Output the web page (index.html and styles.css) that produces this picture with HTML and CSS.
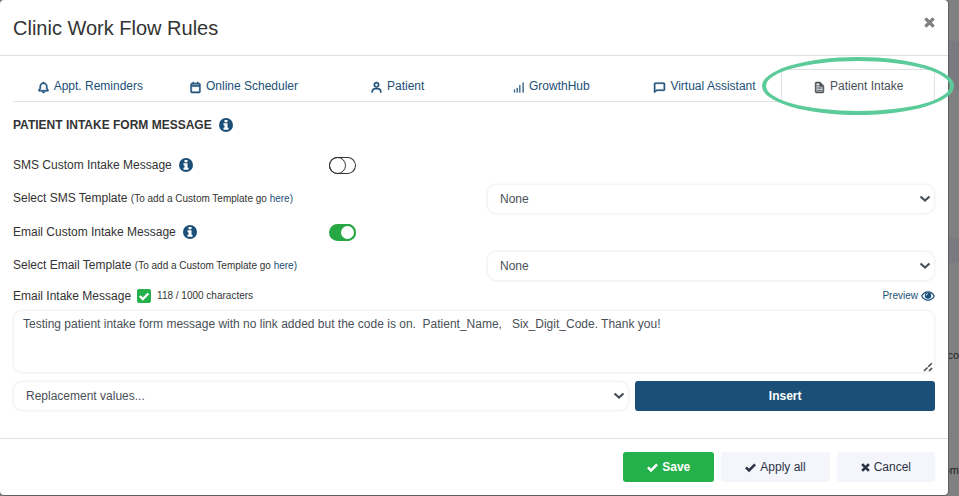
FILE: index.html
```html
<!DOCTYPE html>
<html lang="en">
<head>
    <meta charset="UTF-8">
    <meta name="viewport" content="width=device-width, initial-scale=1.0">
    <title>Clinic Work Flow Rules</title>
    <link rel="stylesheet" href="styles.css">
</head>
<body>
    <svg class="sprite" aria-hidden="true">
        <symbol id="icon-info" viewBox="0 0 14 14">
            <circle cx="7" cy="7" r="7" fill="currentColor"/>
            <path fill="#fff" d="M5.500 2h3v2.300h-3zM4.500 5.300h4v4.500h1v2h-5v-2h1V7.300h-1z"/>
        </symbol>
        <symbol id="icon-check" viewBox="0 0 12 12">
            <path fill="none" stroke="currentColor" stroke-width="2.800" d="M1 5.800l3.400 3.400L11 2.600"/>
        </symbol>
        <symbol id="icon-times" viewBox="0 0 12 12">
            <path fill="none" stroke="currentColor" stroke-width="3.600" d="M1.500 1.500l9 9M10.500 1.500l-9 9"/>
        </symbol>
    </svg>

    <div class="modal" role="dialog" aria-labelledby="modalTitle">
        <header class="modal-header">
            <h1 class="modal-title" id="modalTitle">Clinic Work Flow Rules</h1>
            <button type="button" class="close-btn" aria-label="Close">
                <svg class="icon-close"><use href="#icon-times"/></svg>
            </button>
        </header>

        <form class="modal-form">
            <div class="modal-body">
                <nav class="tabs">
                    <a class="tab" href="#reminders">
                        <svg class="tab-icon" viewBox="0 0 24 24"><path d="M19 13.600V10c0-3.200-2.200-5.900-5.100-6.700C13.600 2.500 12.900 2 12 2s-1.600.5-1.900 1.300C7.200 4.100 5 6.800 5 10v3.600l-1.700 1.700a1 1 0 0 0-.3.7v2a1 1 0 0 0 1 1h16a1 1 0 0 0 1-1v-2a1 1 0 0 0-.3-.7zM19 17H5v-.6l1.700-1.700A1 1 0 0 0 7 14v-4c0-2.800 2.200-5 5-5s5 2.200 5 5v4c0 .3.100.5.3.7l1.700 1.700zM12 22a3 3 0 0 0 2.800-2H9.200A3 3 0 0 0 12 22z"/></svg>
                        Appt. Reminders
                    </a>
                    <a class="tab" href="#scheduler">
                        <svg class="tab-icon" viewBox="0 0 24 24"><path d="M19 4h-2V2h-2v2H9V2H7v2H5a2 2 0 0 0-2 2v14a2 2 0 0 0 2 2h14a2 2 0 0 0 2-2V6a2 2 0 0 0-2-2zm0 16H5V10h14zM5 8V6h14v2z"/></svg>
                        Online Scheduler
                    </a>
                    <a class="tab" href="#patient">
                        <svg class="tab-icon" viewBox="0 0 24 24"><path d="M12 2a5 5 0 1 0 5 5 5 5 0 0 0-5-5zm0 8a3 3 0 1 1 3-3 3 3 0 0 1-3 3zm9 11v-1a7 7 0 0 0-7-7h-4a7 7 0 0 0-7 7v1h2v-1a5 5 0 0 1 5-5h4a5 5 0 0 1 5 5v1z"/></svg>
                        Patient
                    </a>
                    <a class="tab" href="#growthhub">
                        <svg class="tab-icon" viewBox="0 0 24 24"><path d="M4 16h1v5H4zM9 13h1v8H9zM14 8h1v13h-1zM20 3h1v18h-1z"/></svg>
                        GrowthHub
                    </a>
                    <a class="tab" href="#assistant">
                        <svg class="tab-icon" viewBox="0 0 24 24"><path d="M20 3H4a2 2 0 0 0-2 2v17l5.300-4H20a2 2 0 0 0 2-2V5a2 2 0 0 0-2-2zm0 13H6.700L4 18V5h16z"/></svg>
                        Virtual Assistant
                    </a>
                    <a class="tab active" href="#intake" aria-current="page">
                        <svg class="tab-icon" viewBox="0 0 24 24"><path d="M19.900 8.600l-6-6A1 1 0 0 0 13 2H6a2 2 0 0 0-2 2v16a2 2 0 0 0 2 2h12a2 2 0 0 0 2-2V9zM18 20H6V4h6v6h6zM8 12.500h8v1H8zM8 16.500h8v1H8zM8 8.500h2v1H8z"/></svg>
                        Patient Intake
                    </a>
                </nav>

                <h2 class="section-title">
                    PATIENT INTAKE FORM MESSAGE
                    <svg class="info-icon"><use href="#icon-info"/></svg>
                </h2>

                <div class="row row-toggle">
                    <div class="row-label">
                        <label for="smsToggle">SMS Custom Intake Message</label>
                        <svg class="info-icon"><use href="#icon-info"/></svg>
                    </div>
                    <input type="checkbox" class="toggle" id="smsToggle">
                </div>

                <div class="row row-select">
                    <div class="row-text">
                        <label for="smsTemplate">Select SMS Template</label>
                        <small>(To add a Custom Template go <a href="#templates">here)</a></small>
                    </div>
                    <select class="field" id="smsTemplate">
                        <option>None</option>
                    </select>
                </div>

                <div class="row row-toggle">
                    <div class="row-label">
                        <label for="emailToggle">Email Custom Intake Message</label>
                        <svg class="info-icon"><use href="#icon-info"/></svg>
                    </div>
                    <input type="checkbox" class="toggle" id="emailToggle" checked>
                </div>

                <div class="row row-select">
                    <div class="row-text">
                        <label for="emailTemplate">Select Email Template</label>
                        <small>(To add a Custom Template go <a href="#templates">here)</a></small>
                    </div>
                    <select class="field" id="emailTemplate">
                        <option>None</option>
                    </select>
                </div>

                <div class="message-header">
                    <label for="message">Email Intake Message</label>
                    <input type="checkbox" class="check" aria-label="Use email intake message" checked>
                    <small>118 / 1000 characters</small>
                    <a class="preview" href="#preview">
                        Preview
                        <svg class="eye-icon" viewBox="0 0 14 10"><path fill="none" stroke="currentColor" stroke-width="1.200" d="M.7 5C2.200 2.400 4.400.9 7 .9S11.800 2.400 13.300 5C11.800 7.600 9.600 9.100 7 9.100S2.200 7.600.7 5z"/><circle cx="7" cy="4.500" r="3.200" fill="currentColor"/><path fill="none" stroke="#fff" stroke-width=".8" d="M5.200 4.500A1.800 1.800 0 0 1 7 2.700"/></svg>
                    </a>
                </div>
                <textarea class="field message" id="message">Testing patient intake form message with no link added but the code is on.  Patient_Name,   Six_Digit_Code. Thank you!</textarea>

                <div class="insert-row">
                    <select class="field" aria-label="Replacement values">
                        <option>Replacement values...</option>
                    </select>
                    <button type="button" class="btn btn-primary">Insert</button>
                </div>
            </div>

            <footer class="modal-footer">
                <button type="submit" class="btn btn-success"><svg class="btn-icon"><use href="#icon-check"/></svg>Save</button>
                <button type="button" class="btn btn-light"><svg class="btn-icon"><use href="#icon-check"/></svg>Apply all</button>
                <button type="button" class="btn btn-light"><svg class="btn-icon btn-icon-times"><use href="#icon-times"/></svg>Cancel</button>
            </footer>
        </form>
    </div>

    <!-- page behind the modal -->
    <div class="backdrop">
        <div class="band band-top"></div>
        <div class="band band-middle"></div>
        <span class="cell cell-first">co</span>
        <span class="cell cell-second">om</span>
    </div>
</body>
</html>
```
FILE: styles.css
```css
*,
*::before,
*::after {
    box-sizing: border-box;
}

body {
    margin: 0;
    min-height: 100vh;
    background-color: #808080;
    color: #333333;
    font-family: "Liberation Sans", Arial, sans-serif;
    font-size: 12px;
    line-height: 16px;
    overflow: hidden;
}

a {
    color: #1b4f78;
    text-decoration: none;
}

small {
    font-size: 10px;
}

.sprite {
    display: none;
}

/* Modal */
.modal {
    position: relative;
    z-index: 1;
    margin-right: 11px;
    background-color: #ffffff;
    border-radius: 4px;
    box-shadow: 0 0 0 1px #606060;
}

.modal-header {
    display: flex;
    align-items: center;
    justify-content: space-between;
    height: 56px;
    padding: 0 13px;
    border-bottom: 1px solid #dee2e6;
}

.modal-title {
    margin: 0;
    font-size: 20px;
    font-weight: normal;
    line-height: 24px;
}

.close-btn {
    align-self: flex-start;
    display: flex;
    margin-top: 17px;
    padding: 0;
    border: none;
    background: none;
    color: #7f7f7f;
    cursor: pointer;
}

.icon-close {
    width: 11px;
    height: 11px;
}

.modal-body {
    padding: 13px 13px 27px;
}

.modal-footer {
    display: flex;
    justify-content: flex-end;
    gap: 7px;
    padding: 13px;
    border-top: 1px solid #dcdfe6;
}

/* Tabs */
.tabs {
    display: grid;
    grid-template-columns: repeat(6, 1fr);
    height: 33px;
    border-bottom: 1px solid #dee2e6;
}

.tab {
    display: flex;
    align-items: center;
    justify-content: center;
    gap: 4px;
    margin-bottom: -1px;
    border: 1px solid transparent;
}

.tab-icon {
    width: 13px;
    height: 13px;
    margin-top: 3px;
    fill: currentColor;
    stroke: currentColor;
    stroke-width: 1;
}

.tab.active {
    position: relative;
    border-color: #dee2e6;
    border-bottom-color: #ffffff;
    color: #495057;
}

/* Highlight ring round the open tab */
.tab.active::after {
    content: "";
    position: absolute;
    inset: -13px -20px -14px;
    border: 4px solid #5bcb9a;
    border-radius: 50%;
    pointer-events: none;
}

/* Form rows */
.section-title {
    display: flex;
    align-items: center;
    gap: 7px;
    height: 46px;
    margin: 0;
    font-size: 12px;
    font-weight: bold;
}

.info-icon {
    width: 14px;
    height: 14px;
    color: #1b4f78;
}

.row {
    display: grid;
    align-items: center;
    column-gap: 26px;
}

.row-toggle {
    grid-template-columns: repeat(3, 1fr);
    height: 34px;
}

.row-select {
    grid-template-columns: repeat(2, 1fr);
    height: 33px;
}

.row-label {
    display: flex;
    align-items: center;
    gap: 7px;
}

.toggle {
    appearance: none;
    display: flex;
    width: 27px;
    height: 17px;
    margin: 0;
    border-radius: 9px;
    box-shadow: inset 0 0 0 1px #333333;
    cursor: pointer;
}

.toggle::before {
    content: "";
    width: 17px;
    height: 17px;
    border: 1px solid #333333;
    border-radius: 50%;
}

.toggle:checked {
    justify-content: flex-end;
    background-color: #28a745;
    box-shadow: none;
}

.toggle:checked::before {
    border: 2px solid #28a745;
    background-color: #ffffff;
}

.field {
    width: 100%;
    height: 30px;
    padding: 0 12px;
    border: 1px solid #f3f3f4;
    border-radius: 9px;
    background-color: #ffffff;
    box-shadow: 0 0 3px rgba(0, 0, 0, 0.06);
    color: #495057;
    font-family: inherit;
    font-size: 12px;
    line-height: 16px;
}

select.field {
    appearance: none;
    background-image: url("data:image/svg+xml,%3Csvg xmlns='http://www.w3.org/2000/svg' width='12' height='8' viewBox='0 0 12 8'%3E%3Cpath d='M1.500 1.500L6 5.500l4.500-4' fill='none' stroke='%23495057' stroke-width='2.200'/%3E%3C/svg%3E");
    background-repeat: no-repeat;
    background-position: right 3px center;
}

.message-header {
    display: flex;
    align-items: center;
    gap: 6px;
    height: 28px;
}

.check {
    appearance: none;
    width: 14px;
    height: 14px;
    margin: 0;
    border-radius: 2px;
    background: #24b04b url("data:image/svg+xml,%3Csvg xmlns='http://www.w3.org/2000/svg' viewBox='0 0 14 14'%3E%3Cpath d='M2.800 7l3 3 5.500-5.500' fill='none' stroke='%23fff' stroke-width='2.400'/%3E%3C/svg%3E");
}

.preview {
    display: flex;
    align-items: center;
    gap: 3px;
    margin-left: auto;
    font-size: 10px;
}

.eye-icon {
    width: 14px;
    height: 10px;
}

.message {
    display: block;
    height: 63px;
    padding: 5px 9px;
    resize: vertical;
}

.message::-webkit-resizer {
    background: url("data:image/svg+xml,%3Csvg xmlns='http://www.w3.org/2000/svg' width='15' height='15' viewBox='0 0 15 15'%3E%3Cpath d='M5 14l8-8M10 14l3-3' stroke='%23444' stroke-width='1.500' stroke-dasharray='5 1'/%3E%3C/svg%3E") no-repeat right bottom;
}

.insert-row {
    display: grid;
    grid-template-columns: 1fr 32.5%;
    gap: 6px;
    margin-top: 8px;
}

/* Buttons */
.btn {
    display: flex;
    align-items: center;
    justify-content: center;
    gap: 4px;
    height: 30px;
    padding: 0 24px;
    border: none;
    border-radius: 3px;
    font-family: inherit;
    font-size: 12px;
    cursor: pointer;
}

.btn-primary {
    background-color: #1b4f78;
    color: #ffffff;
    font-weight: bold;
}

.btn-success {
    background-color: #24b04b;
    color: #ffffff;
    font-weight: bold;
}

.btn-light {
    background-color: #f4f6fb;
    color: #2c3345;
}

.btn-icon {
    width: 11px;
    height: 11px;
}

.btn-icon-times {
    width: 9px;
    height: 9px;
}

/* Page behind the modal */
.backdrop {
    position: absolute;
    inset: 0;
}

.band {
    position: absolute;
    left: 0;
    right: 0;
    background-color: #7a7a80;
}

.band-top {
    top: 41px;
    height: 49px;
}

.band-middle {
    top: 238px;
    height: 25px;
}

.cell {
    position: absolute;
    right: 0;
    color: #222222;
    font-size: 11px;
}

.cell-first {
    top: 347px;
}

.cell-second {
    top: 462px;
}
```
